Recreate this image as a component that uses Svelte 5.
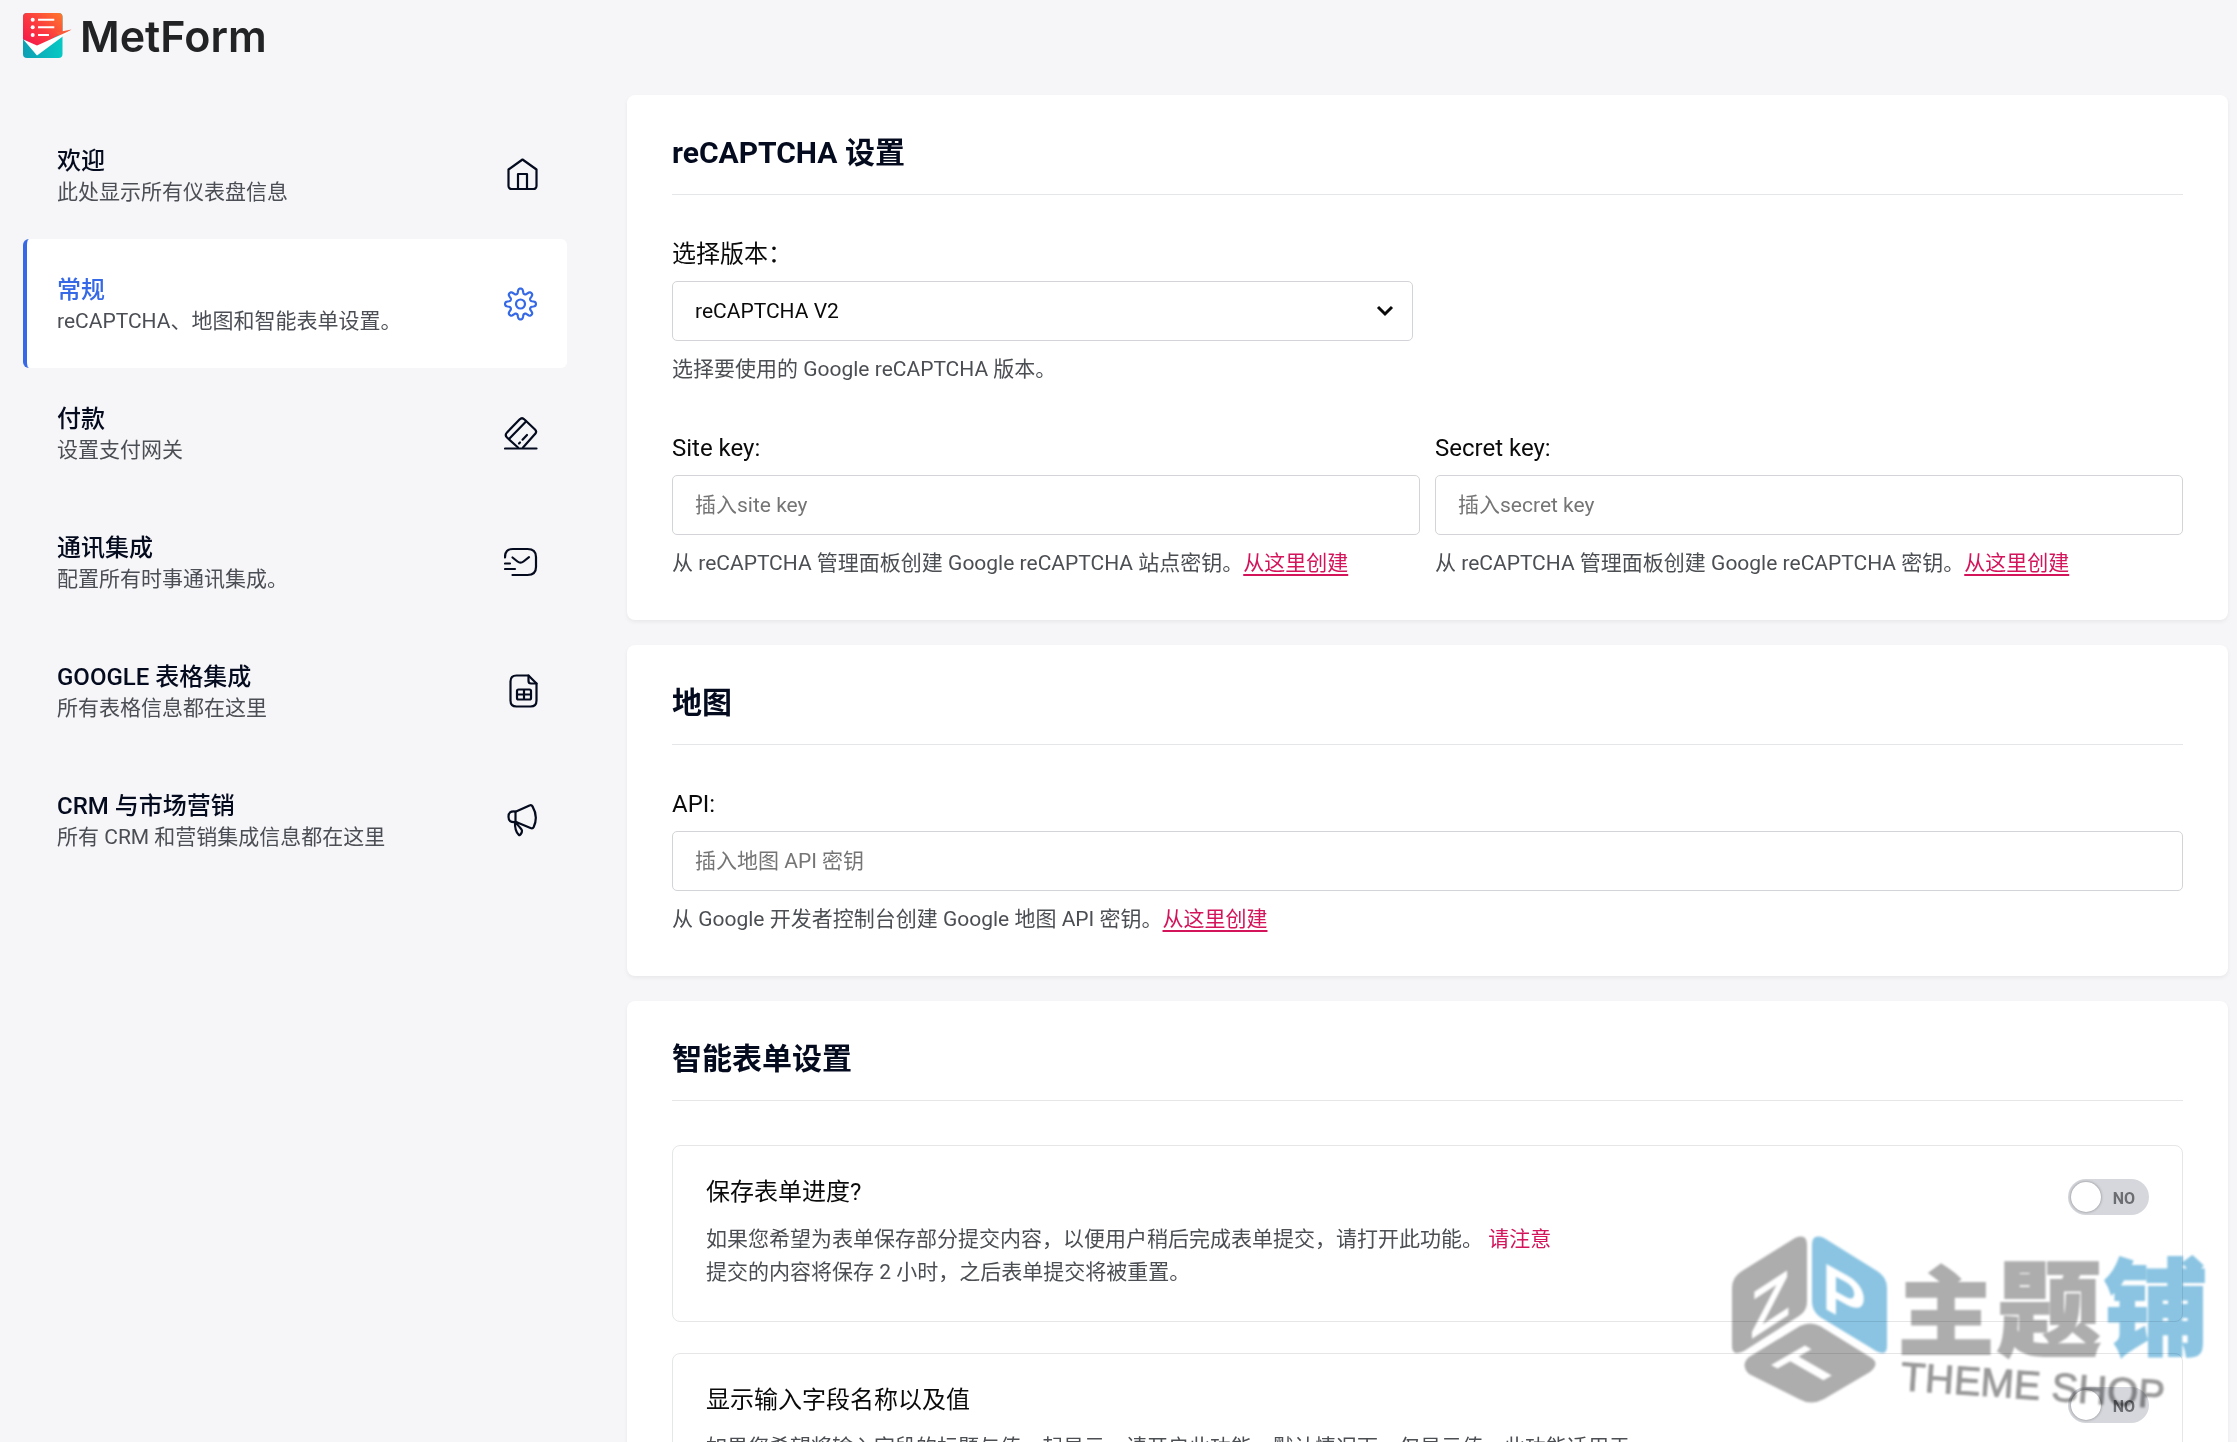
<script>
  const gearPoints = Array.from({ length: 160 }, (_, i) => {
    const angle = (i / 160) * Math.PI * 2;
    const radius = 13 + (2.4 * Math.tanh(1.6 * Math.cos(angle * 8))) / Math.tanh(1.6);
    return `${(16.5 + radius * Math.cos(angle)).toFixed(2)} ${(17 + radius * Math.sin(angle)).toFixed(2)}`;
  });

  const icons = {
    home: ['M4.5 11.5V28a3 3 0 0 0 3 3h22a3 3 0 0 0 3-3V11.5L18.5 1.5Z', 'M14 31V16h9v15'],
    gear: [`M${gearPoints.join('L')}Z`, 'M12 17a4.5 4.5 0 1 0 9 0a4.5 4.5 0 1 0-9 0Z'],
    card: [
      'M14 31.5L3 21.5q-2.500-2.500 0-5L15.500 3.500q2.500-2.500 5 0L31 13.500q2.300 2.300 0 4.600L19 31.500',
      'M5 23L22 5.500',
      'M15 27.500l1-1M18.500 23.700l4.500-4.700',
      'M1 32.500H32.500',
    ],
    mail: [
      'M1 12.500C1 6.500 3.500 4 9 4h14.500c5.500 0 8.500 3 8.500 8v10c0 5-3 8-8.500 8H8.500',
      'M8.500 12.500l5 4q3 2.400 6 0l5.500-4.300',
      'M1 18.500h5M1 24h10',
    ],
    sheet: [
      'M24.500 1.500H12.500q-6 0-6 6v19q0 6 6 6h14q6 0 6-6V9.500Z',
      'M24.500 1.500v5.500q0 2.500 2.500 2.500h5.500',
      'M14.500 15.500h11q1.500 0 1.500 1.500v7q0 1.500-1.500 1.500h-11q-1.500 0-1.500-1.500v-7q0-1.500 1.500-1.500ZM20 15.500v10M13 20.500h14',
    ],
    horn: [
      'M11.500 8.500C6.500 8 4.500 9.500 4.500 13.700s2 5.700 7 5.300Z',
      'M11.500 8.800L25.500 2.400q2-.8 3 1q6 10.300 1.200 20.600q-1 2-3.200 1L11.500 18.800',
      'M11 19c-.2 5 0 9.500 3.800 12.800q1 .8 1.700-.3c3-4 1-5-1-7.500Q13 22 12.500 19.300',
    ],
  };

  const menu = [
    { title: '欢迎', text: '此处显示所有仪表盘信息', icon: 'home' },
    { title: '常规', text: 'reCAPTCHA、地图和智能表单设置。', icon: 'gear' },
    { title: '付款', text: '设置支付网关', icon: 'card' },
    { title: '通讯集成', text: '配置所有时事通讯集成。', icon: 'mail' },
    { title: 'GOOGLE 表格集成', text: '所有表格信息都在这里', icon: 'sheet' },
    { title: 'CRM 与市场营销', text: '所有 CRM 和营销集成信息都在这里', icon: 'horn' },
  ];
  let active = $state('常规');
  let saveProgress = $state(false);
  let showNames = $state(false);
</script>

<div class="page" lang="zh-CN">
  <header class="brand">
    <svg class="brand-mark" viewBox="0 0 49 45" aria-hidden="true">
      <defs>
        <linearGradient id="warm" x1="0" y1="1" x2="1" y2="0">
          <stop offset="0" stop-color="#f5124d" />
          <stop offset=".5" stop-color="#fb3a3f" />
          <stop offset="1" stop-color="#ff7a2c" />
        </linearGradient>
        <linearGradient id="cool" x1="0" y1="0" x2="1" y2="0">
          <stop offset="0" stop-color="#0e9fb4" />
          <stop offset="1" stop-color="#06c9c4" />
        </linearGradient>
      </defs>
      <rect width="39.500" height="45" rx="4" fill="url(#cool)" />
      <path d="M4 0h31.500a4 4 0 0 1 4 4v16L14 34L0 26V4a4 4 0 0 1 4-4Z" fill="url(#warm)" />
      <path d="M33 19.500L48.500 16.500L38 24Z" fill="#fb5a3a" />
      <path d="M.3 26.500L14 32.500L48.500 17L14 42.500Z" fill="#fff" />
      <g fill="#fff">
        <circle cx="9.700" cy="6.700" r="2" /><circle cx="9.700" cy="14.300" r="2" /><circle cx="9.700" cy="22" r="2" />
        <path d="M15 5.700h16.300v2H15zM15 13.300h16.300v2H15zM15 21h11v2H15z" />
      </g>
    </svg>
    <span class="brand-name">MetForm</span>
  </header>

  <div class="layout">
    <nav class="menu">
      {#each menu as item}
        <button type="button" class="menu-item" class:active={active === item.title} onclick={() => (active = item.title)}>
          <span class="menu-copy">
            <span class="menu-title">{item.title}</span>
            <span class="menu-text">{item.text}</span>
          </span>
          <svg class="menu-icon" viewBox="0 0 34 34" aria-hidden="true">
            {#each icons[item.icon] as d}<path {d} />{/each}
          </svg>
        </button>
      {/each}
    </nav>

    <main class="content">
      <section class="card">
        <h2>reCAPTCHA 设置</h2>
        <div class="field half">
          <label for="version">选择版本：</label>
          <div class="select-wrap">
            <select id="version">
              <option>reCAPTCHA V2</option>
              <option>reCAPTCHA V3</option>
            </select>
            <svg class="chevron" viewBox="0 0 18 12" aria-hidden="true"><path d="M2 2l7 7l7-7" /></svg>
          </div>
          <p class="hint">选择要使用的 Google reCAPTCHA 版本。</p>
        </div>
        <div class="columns">
          <div class="field">
            <label for="site">Site key:</label>
            <input id="site" type="text" placeholder="插入site key" />
            <p class="hint">从 reCAPTCHA 管理面板创建 Google reCAPTCHA 站点密钥。<a href="#site">从这里创建</a></p>
          </div>
          <div class="field">
            <label for="secret">Secret key:</label>
            <input id="secret" type="text" placeholder="插入secret key" />
            <p class="hint">从 reCAPTCHA 管理面板创建 Google reCAPTCHA 密钥。<a href="#secret">从这里创建</a></p>
          </div>
        </div>
      </section>

      <section class="card">
        <h2>地图</h2>
        <div class="field">
          <label for="api">API:</label>
          <input id="api" type="text" placeholder="插入地图 API 密钥" />
          <p class="hint">从 Google 开发者控制台创建 Google 地图 API 密钥。<a href="#api">从这里创建</a></p>
        </div>
      </section>

      <section class="card">
        <h2>智能表单设置</h2>
        <div class="options">
          <div class="option">
            <div>
              <label for="progress">保存表单进度?</label>
              <p>
                如果您希望为表单保存部分提交内容，以便用户稍后完成表单提交，请打开此功能。 <strong>请注意</strong><br />
                提交的内容将保存 2 小时，之后表单提交将被重置。
              </p>
            </div>
            <span class="toggle">
              <input id="progress" type="checkbox" bind:checked={saveProgress} />
              <span class="state">{saveProgress ? 'YES' : 'NO'}</span>
            </span>
          </div>
          <div class="option">
            <div>
              <label for="names">显示输入字段名称以及值</label>
              <p>如果您希望将输入字段的标题与值一起显示，请开启此功能。默认情况下，仅显示值。此功能适用于</p>
            </div>
            <span class="toggle">
              <input id="names" type="checkbox" bind:checked={showNames} />
              <span class="state">{showNames ? 'YES' : 'NO'}</span>
            </span>
          </div>
        </div>
      </section>
    </main>
  </div>

  <svg class="stamp" viewBox="0 0 480 180" role="img" aria-label="主题铺 THEME SHOP">
    <g class="grey">
      <path d="M12 41L65 8Q77 3 77 15V72Q77 81 69 86L14 121Q2 127 2 116V58Q2 47 12 41Z" />
      <path d="M19 127L70 96Q80 91 90 96L140 127Q151 133 140 142L94 169Q81 176 69 169L19 144Q10 135 19 127Z" />
    </g>
    <path class="blue" d="M94 8L147 41Q157 47 157 58V116Q157 127 146 121L90 87Q82 81 82 72V15Q82 3 94 8Z" />
    <g class="face">
      <text transform="matrix(1 -.65 0 1 20 110)">Z</text>
      <text transform="matrix(1 .55 0 1 92 77)">P</text>
      <text transform="matrix(.87 -.5 .87 .5 80 158)">T</text>
    </g>
    <g class="chars">
      <text class="grey c1" x="168" y="117">主</text>
      <text class="grey c2" x="267" y="118">题</text>
      <text class="blue c2" x="374" y="117">铺</text>
    </g>
    <text class="latin" transform="translate(170 160) rotate(4)">THEME SHOP</text>
  </svg>
</div>

<style>
  :global(body) {
    background: #f6f6f8;
  }
  * {
    box-sizing: border-box;
  }
  .page {
    position: relative;
    height: 100vh;
    overflow: hidden;
    background: #f6f6f8;
    color: #0a0a0a;
    font-family: Roboto, 'Noto Sans CJK SC', sans-serif;
  }
  .brand {
    display: flex;
    align-items: center;
    gap: 8px;
    height: 71px;
    padding-left: 23px;
  }
  .brand-mark {
    width: 49px;
    height: 45px;
  }
  .brand-name {
    color: #222324;
    font-family: Inter, Roboto, sans-serif;
    font-size: 43px;
    font-weight: 600;
    line-height: 48px;
  }
  .layout {
    display: flex;
    align-items: flex-start;
    gap: 60px;
    padding: 24px 9px 24px 23px;
  }
  .menu {
    flex: none;
    width: 544px;
    padding-top: 15px;
  }
  .menu-item {
    display: flex;
    align-items: center;
    justify-content: space-between;
    width: 100%;
    padding: 32px 29px 31px 30px;
    border: 0;
    border-left: 4px solid transparent;
    border-radius: 6px;
    background: none;
    color: #050b1f;
    font-family: inherit;
    text-align: left;
    cursor: pointer;
  }
  .menu-item.active {
    border-left-color: #3569e6;
    background: #fff;
  }
  .menu-copy {
    display: grid;
    padding-top: 4px;
  }
  .menu-title {
    font-size: 24px;
    font-weight: 500;
    line-height: 31px;
  }
  .menu-text {
    color: #4b4e54;
    font-size: 21px;
    line-height: 31px;
  }
  .active .menu-title,
  .active .menu-icon {
    color: #3569e6;
  }
  .menu-icon {
    flex: none;
    width: 34px;
    height: 34px;
    fill: none;
    stroke: currentColor;
    stroke-width: 2.2;
    stroke-linecap: round;
    stroke-linejoin: round;
  }
  .content {
    display: grid;
    flex: 1;
    gap: 25px;
    min-width: 0;
  }
  .card {
    padding: 35px 45px 40px;
    border-radius: 8px;
    background: #fff;
    box-shadow: 0 2px 4px rgba(0, 0, 0, 0.06);
  }
  h2 {
    margin: 0 0 41px;
    padding-bottom: 18px;
    border-bottom: 1px solid #e5e6e8;
    color: #050b1f;
    font-size: 30px;
    font-weight: 700;
    line-height: 46px;
  }
  .columns {
    display: grid;
    grid-template-columns: 1fr 1fr;
    gap: 15px;
    margin-top: 44px;
  }
  .half {
    width: calc(50% - 15px);
  }
  label {
    display: block;
    font-size: 24px;
    line-height: 36px;
  }
  .field label {
    margin-bottom: 9px;
  }
  .field input,
  select {
    display: block;
    width: 100%;
    height: 60px;
    padding: 0 22px;
    border: 1px solid #d2d4d7;
    border-radius: 5px;
    background: #fff;
    color: #0a0a0a;
    font-family: inherit;
    font-size: 21px;
    appearance: none;
  }
  .field input::placeholder {
    color: #757575;
    opacity: 1;
  }
  .select-wrap {
    position: relative;
  }
  .chevron {
    position: absolute;
    top: 24px;
    right: 19px;
    width: 18px;
    height: 12px;
    fill: none;
    stroke: #0a0a0a;
    stroke-width: 3;
    pointer-events: none;
  }
  .hint {
    margin: 12px 0 0;
    color: #4b4e52;
    font-size: 21px;
    line-height: 33px;
  }
  a {
    color: #d3145a;
    text-underline-offset: 4px;
  }
  .options {
    display: grid;
    gap: 31px;
    padding-top: 3px;
  }
  .option {
    display: flex;
    justify-content: space-between;
    padding: 28px 33px 32px;
    border: 1px solid #e5e6e8;
    border-radius: 8px;
  }
  .option p {
    margin: 13px 0 0;
    color: #4b4e52;
    font-size: 21px;
    line-height: 33px;
  }
  strong {
    color: #d3145a;
    font-weight: 400;
  }
  .toggle {
    position: relative;
    flex: none;
    width: 81px;
    height: 36px;
    margin-top: 5px;
  }
  .toggle input {
    display: flex;
    align-items: center;
    width: 100%;
    height: 100%;
    margin: 0;
    padding: 3px;
    border-radius: 18px;
    background: #d5d7dc;
    appearance: none;
    cursor: pointer;
  }
  .toggle input::before {
    width: 30px;
    height: 30px;
    border-radius: 50%;
    background: #fff;
    box-shadow: 0 0 3px rgba(0, 0, 0, 0.4);
    content: '';
  }
  .toggle input:checked {
    justify-content: flex-end;
    background: #3569e6;
  }
  .state {
    position: absolute;
    top: 10px;
    right: 14px;
    color: #6b6d71;
    font-size: 16px;
    font-weight: 700;
    line-height: 20px;
    pointer-events: none;
  }
  .toggle input:checked + .state {
    right: auto;
    left: 12px;
    color: #fff;
  }
  .stamp {
    position: absolute;
    right: 27px;
    bottom: 32px;
    width: 480px;
    height: 180px;
    overflow: visible;
    mix-blend-mode: multiply;
    pointer-events: none;
    filter: blur(1px);
  }
  .grey {
    fill: #adadad;
    stroke: #adadad;
  }
  .blue {
    fill: #8ac4e2;
    stroke: #8ac4e2;
  }
  .stamp path {
    stroke: none;
  }
  .face {
    fill: #fff;
    font-family: 'Liberation Sans', sans-serif;
    font-size: 66px;
    font-weight: 700;
  }
  .chars {
    font-family: 'Noto Sans CJK SC', sans-serif;
    font-weight: 900;
    stroke-width: 2;
  }
  .c1 {
    font-size: 96px;
  }
  .c2 {
    font-size: 104px;
  }
  .latin {
    fill: #999;
    stroke: #999;
    stroke-width: 1;
    font-family: 'Liberation Sans', sans-serif;
    font-size: 40px;
  }
</style>
